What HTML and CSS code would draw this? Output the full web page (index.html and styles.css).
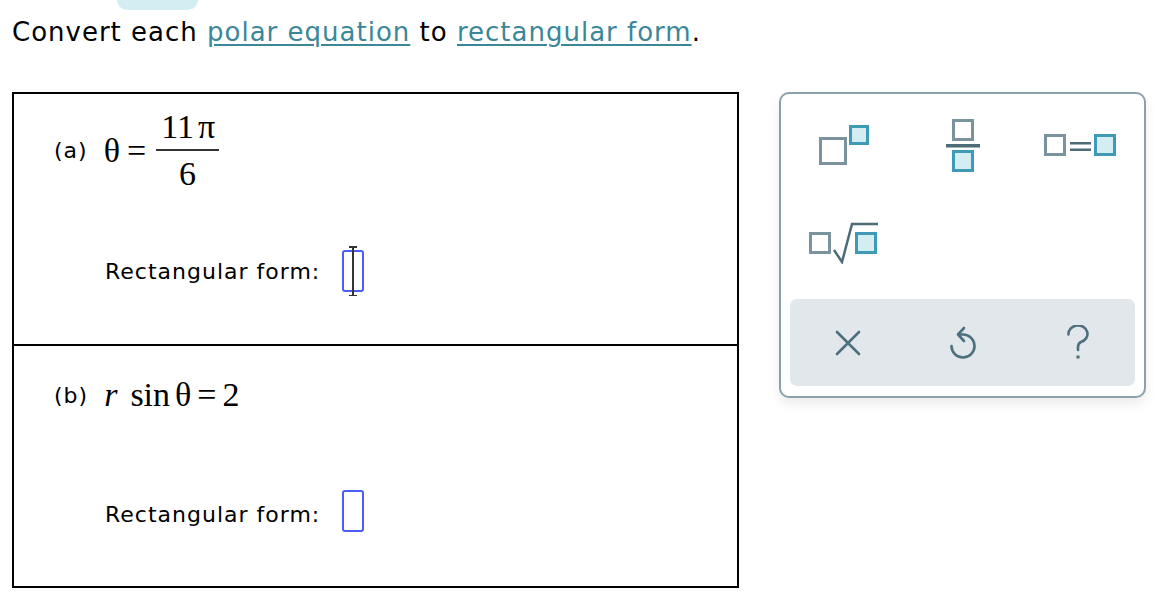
FILE: index.html
```html
<!DOCTYPE html>
<html>
<head>
<meta charset="utf-8">
<link rel="stylesheet" href="styles.css">
</head>
<body>
<div class="tab"></div>
<h1 class="title">Convert each <a class="link">polar equation</a> to <a class="link">rectangular form</a>.</h1>
<div class="main">
  <div class="problems">
    <section class="part part-a">
      <div class="eq">
        <span class="label">(a)</span>
        <span class="math">θ<span class="op">=</span><span class="frac"><span class="num">11<span class="pi">π</span></span><span class="den">6</span></span></span>
      </div>
      <div class="answer">
        <span class="ans-label">Rectangular form:</span>
        <span class="box"><span class="cursor"></span></span>
      </div>
    </section>
    <section class="part part-b">
      <div class="eq">
        <span class="label">(b)</span>
        <span class="math"><i class="var">r</i><span class="fn">sin</span><span class="th">θ</span><span class="op op-b">=</span>2</span>
      </div>
      <div class="answer">
        <span class="ans-label ans-b">Rectangular form:</span>
        <span class="box"></span>
      </div>
    </section>
  </div>
  <div class="panel">
    <div class="keys">
      <div class="key k-sup">
        <svg width="50" height="40" viewBox="0 0 50 40">
          <rect x="1.5" y="13.5" width="25" height="25" fill="#fff" stroke="#7a939c" stroke-width="3"/>
          <rect x="31.5" y="1.5" width="17" height="17" fill="#d4edf3" stroke="#3f9ab6" stroke-width="3"/>
        </svg>
      </div>
      <div class="key k-frac">
        <svg width="34" height="53" viewBox="0 0 34 53">
          <rect x="7.5" y="1.5" width="19" height="19" fill="#fff" stroke="#7a939c" stroke-width="3"/>
          <rect x="0" y="25" width="34" height="3.5" fill="#4e6b78"/>
          <rect x="7.5" y="32.5" width="19" height="19" fill="#d4edf3" stroke="#3f9ab6" stroke-width="3"/>
        </svg>
      </div>
      <div class="key k-eq">
        <svg width="72" height="22" viewBox="0 0 72 22">
          <rect x="1.5" y="1.5" width="19" height="19" fill="#fff" stroke="#7a939c" stroke-width="3"/>
          <rect x="26" y="8" width="21" height="2.5" fill="#4e6b78"/>
          <rect x="26" y="14.5" width="21" height="2.5" fill="#4e6b78"/>
          <rect x="51.5" y="1.5" width="19" height="19" fill="#d4edf3" stroke="#3f9ab6" stroke-width="3"/>
        </svg>
      </div>
      <div class="key k-sqrt">
        <svg width="70" height="42" viewBox="0 0 70 42">
          <rect x="1.5" y="11.5" width="19" height="19" fill="#fff" stroke="#7a939c" stroke-width="3"/>
          <path d="M25 28 L33 40 L43 2 L69 2" fill="none" stroke="#4e6b78" stroke-width="2.5"/>
          <rect x="47.5" y="11.5" width="19" height="19" fill="#d4edf3" stroke="#3f9ab6" stroke-width="3"/>
        </svg>
      </div>
      <div class="key"></div>
      <div class="key"></div>
    </div>
    <div class="actions">
      <div class="act">
        <svg width="26" height="26" viewBox="0 0 26 26"><path d="M2 2 L24 24 M24 2 L2 24" stroke="#4e6f7d" stroke-width="2.6" stroke-linecap="round"/></svg>
      </div>
      <div class="act">
        <svg width="28" height="34" viewBox="0 0 28 34"><path d="M2.5 20 A11.5 11.5 0 1 0 14 8.5 L10 8.5" fill="none" stroke="#4e6f7d" stroke-width="2.6" stroke-linecap="round"/><path d="M15 2 L9 8.5 L15 15" fill="none" stroke="#4e6f7d" stroke-width="2.6" stroke-linecap="round" stroke-linejoin="round"/></svg>
      </div>
      <div class="act">
        <svg width="26" height="36" viewBox="0 0 26 36"><path d="M3.5 9.5 A9.5 8.5 0 1 1 16 17 Q13 18.5 13 22 L13 25" fill="none" stroke="#4e6f7d" stroke-width="2.6" stroke-linecap="round"/><circle cx="13" cy="32" r="1.8" fill="#4e6f7d"/></svg>
      </div>
    </div>
  </div>
</div>
</body>
</html>
```
FILE: styles.css
```css
* { box-sizing: border-box; }
body {
  margin: 0;
  background: #fff;
  font-family: "DejaVu Sans", Verdana, sans-serif;
  color: #000;
}
.tab {
  width: 81px;
  height: 10px;
  margin-left: 117px;
  background: #d4edf3;
  border-radius: 0 0 12px 12px;
}
.title {
  margin: 5px 0 0 12px;
  font-size: 26px;
  font-weight: normal;
  line-height: 34px;
  letter-spacing: 1px;
}
.link {
  color: #3a8799;
  text-decoration: underline;
  text-decoration-thickness: 2px;
  text-underline-offset: 3px;
}
.main {
  display: flex;
  align-items: flex-start;
  gap: 40px;
  margin: 43px 0 0 12px;
}
.problems {
  width: 727px;
  border: 2px solid #000;
}
.part {
  display: flex;
  flex-direction: column;
}
.part-a { height: 252px; border-bottom: 2px solid #000; }
.part-b { height: 240px; }
.eq {
  display: flex;
  align-items: center;
  margin-left: 40px;
  gap: 16px;
}
.part-a .eq { margin-top: 15px; }
.part-b .eq { margin-top: 29px; height: 40px; }
.label { font-size: 22px; letter-spacing: 1px; }
.math {
  font-family: "Liberation Serif", "Times New Roman", serif;
  font-size: 34px;
  display: inline-flex;
  align-items: center;
  line-height: 40px;
}
.op { margin: 0 7px 0 7px; }
.frac {
  display: inline-flex;
  flex-direction: column;
  align-items: center;
  margin-left: 3px;
}
.num {
  padding: 0 4px 4px 5px;
  border-bottom: 2.5px solid #333;
  line-height: 36px;
}
.pi { margin-left: 4px; }
.den { line-height: 36px; padding-top: 5px; }
.var { margin-right: 13px; }
.th { margin-left: 5px; }
.op-b { margin: 0 6px 0 6px; }
.answer {
  display: flex;
  align-items: center;
  margin-left: 91px;
  gap: 22px;
  height: 42px;
}
.part-a .answer { margin-top: 58px; }
.part-b .answer { margin-top: 75px; }
.ans-label { font-size: 22px; letter-spacing: 1px; }
.ans-b { padding-top: 6px; }
.box {
  position: relative;
  width: 22px;
  height: 42px;
  border: 2px solid #4a5df7;
  border-radius: 3px;
}
.cursor {
  position: absolute;
  left: 8px;
  top: -6px;
  width: 2px;
  height: 50px;
  background: #333;
}
.cursor::before, .cursor::after {
  content: "";
  position: absolute;
  left: -3px;
  width: 8px;
  height: 1.5px;
  background: #333;
}
.cursor::before { top: 0; }
.cursor::after { bottom: 0; }
.panel {
  width: 367px;
  height: 306px;
  border: 2px solid #8ba1aa;
  border-radius: 10px;
  background: #fff;
  box-shadow: 0 6px 12px rgba(0,0,0,0.08);
  padding: 9px 9px 10px 9px;
  display: flex;
  flex-direction: column;
}
.keys {
  display: grid;
  grid-template-columns: repeat(3, 1fr);
  grid-template-rows: 84px 112px;
  height: 196px;
}
.key {
  display: flex;
  align-items: center;
  justify-content: center;
}
.k-sup svg { margin-right: 8px; }
.k-eq svg { margin-left: 4px; }
.k-sqrt svg { margin-right: 8px; }
.actions {
  flex: 1;
  background: #e1e7ea;
  border-radius: 7px;
  display: grid;
  grid-template-columns: repeat(3, 1fr);
}
.act {
  display: flex;
  align-items: center;
  justify-content: center;
}
```
